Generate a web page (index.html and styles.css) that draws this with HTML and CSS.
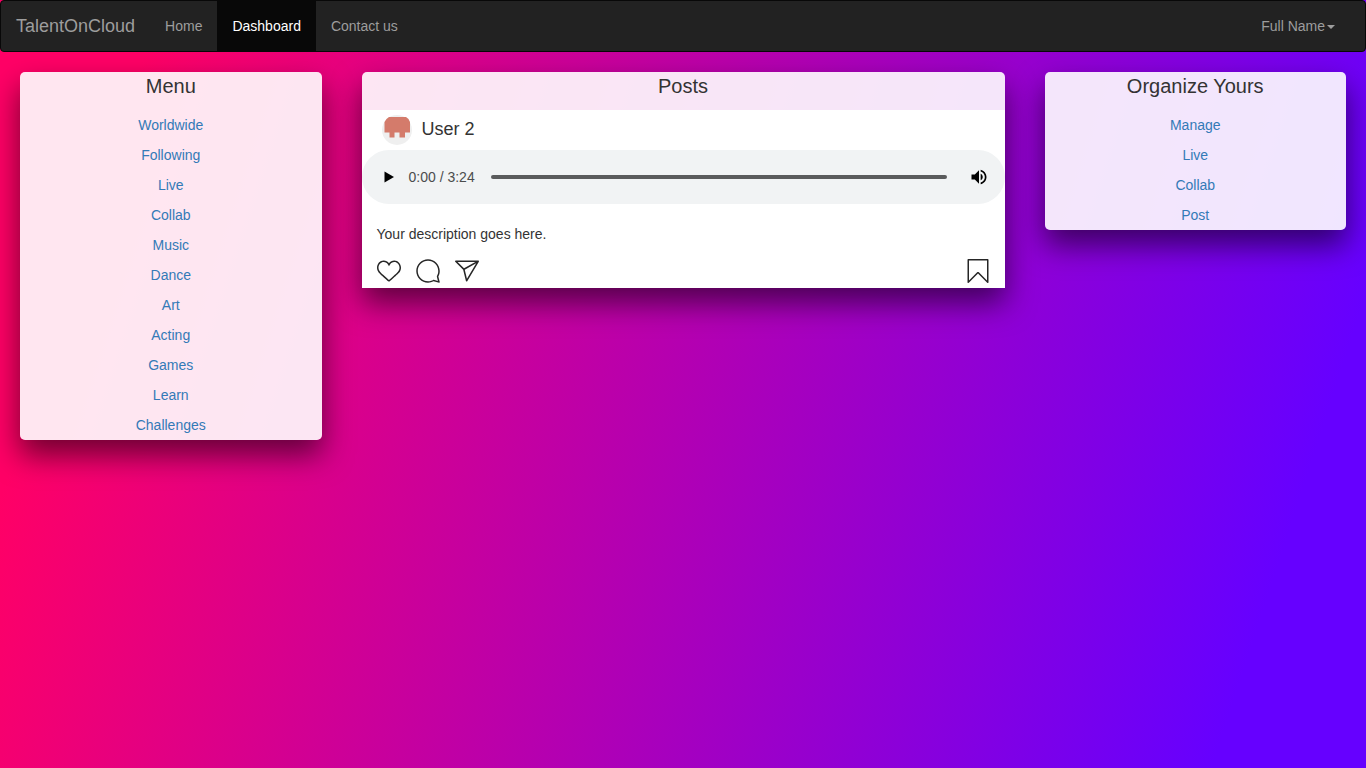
FILE: index.html
```html
<!DOCTYPE html>
<html lang="en">
<head>
<meta charset="utf-8">
<title>TalentOnCloud</title>
<link rel="stylesheet" href="styles.css">
</head>
<body>
<nav class="navbar">
  <a class="brand">TalentOnCloud</a>
  <a class="nav-link">Home</a>
  <a class="nav-link active">Dashboard</a>
  <a class="nav-link">Contact us</a>
  <a class="nav-link account">Full Name<span class="caret"></span></a>
</nav>
<main class="columns">
  <section class="card">
    <h2 class="title">Menu</h2>
    <ul class="links">
      <li><a>Worldwide</a></li><li><a>Following</a></li><li><a>Live</a></li><li><a>Collab</a></li>
      <li><a>Music</a></li><li><a>Dance</a></li><li><a>Art</a></li><li><a>Acting</a></li>
      <li><a>Games</a></li><li><a>Learn</a></li><li><a>Challenges</a></li>
    </ul>
  </section>
  <section class="card posts">
    <h2 class="title">Posts</h2>
    <article class="post">
      <header class="author">
        <svg class="avatar" viewBox="0 0 30 30"><circle cx="15" cy="15" r="15" fill="#efefef"/><path d="M7 2h17l2.500 2L28 7v10.500h-5v5h-5.500v-5h-5v5h-5v-5H2.500V7l2-3z" fill="#d47b6b"/></svg>
        <span>User 2</span>
      </header>
      <div class="player">
        <svg class="play" width="10" height="12" viewBox="0 0 10 12"><path d="M.5 .5v11L10 6z"/></svg>
        <span class="time">0:00 / 3:24</span>
        <span class="track"></span>
        <svg class="volume" width="20" height="20" viewBox="0 0 24 24"><path d="M3 9v6h4l5 5V4L7 9H3zm13.500 3c0-1.770-1.020-3.290-2.500-4.030v8.050c1.480-.730 2.500-2.250 2.500-4.020zM14 3.230v2.060c2.890.860 5 3.540 5 6.710s-2.110 5.850-5 6.710v2.060c4.010-.910 7-4.490 7-8.770s-2.990-7.860-7-8.770z"/></svg>
      </div>
      <p class="description">Your description goes here.</p>
      <div class="actions">
        <svg viewBox="0 0 48 48"><path d="M34.600 6.100c5.700 0 10.400 5.200 10.400 11.500 0 6.800-5.900 11-11.500 16S25 41.300 24 41.900c-1.100-.7-4.700-4-9.500-8.300-5.700-5-11.500-9.200-11.500-16C3 11.300 7.700 6.100 13.400 6.100c4.200 0 6.500 2 8.100 4.300 1.900 2.600 2.200 3.900 2.500 3.900.3 0 .6-1.300 2.500-3.900 1.600-2.300 3.900-4.300 8.100-4.300m0-3c-4.500 0-7.900 1.800-10.600 5.600-2.700-3.700-6.100-5.500-10.600-5.500C6 3.100 0 9.600 0 17.600c0 7.300 5.400 12 10.600 16.500.6.500 1.300 1.100 1.900 1.700l2.300 2c4.400 3.900 6.600 5.900 7.600 6.500.5.300 1.100.5 1.600.5.600 0 1.100-.2 1.600-.5 1-.6 2.800-2.200 7.800-6.800l2-1.800c.7-.6 1.300-1.200 2-1.700C42.700 29.600 48 25 48 17.600c0-8-6-14.500-13.400-14.500z"/></svg>
        <svg viewBox="0 0 48 48"><path clip-rule="evenodd" fill-rule="evenodd" d="M47.500 46.100l-2.800-11c1.800-3.300 2.800-7.100 2.800-11.100C47.500 11 37 .5 24 .5S.5 11 .5 24 11 47.500 24 47.500c4 0 7.800-1 11.100-2.800l11 2.800c.8.200 1.600-.6 1.400-1.400zm-3-22.100c0 4-1 7-2.600 10-.2.400-.3.900-.2 1.400l2.100 8.400-8.300-2.100c-.5-.1-1-.1-1.400.2-1.800 1-5.200 2.600-10 2.600-11.400 0-20.600-9.200-20.600-20.500S12.700 3.500 24 3.500 44.500 12.700 44.500 24z"/></svg>
        <svg viewBox="0 0 48 48"><path d="M47.800 3.800c-.3-.5-.8-.8-1.300-.8h-45C.9 3.100.3 3.500.1 4S0 5.200.4 5.700l15.900 15.600 5.500 22.600c.1.600.6 1 1.200 1.100h.2c.5 0 1-.3 1.300-.7l23.200-39c.4-.4.4-1 .1-1.500zM5.200 6.100h35.500L18 18.700 5.200 6.100zm18.700 33.600l-4.400-18.400L42.400 8.600 23.900 39.700z"/></svg>
        <svg class="save" viewBox="0 0 48 48"><path d="M43.500 48c-.4 0-.8-.2-1.100-.4L24 29 5.600 47.600c-.4.400-1.100.6-1.600.3-.6-.2-1-.8-1-1.400v-45C3 .7 3.700 0 4.500 0h39c.8 0 1.500.7 1.500 1.500v45c0 .6-.4 1.200-.9 1.400-.2.100-.4.100-.6.100zM24 26c.8 0 1.600.3 2.200.9l15.800 16V3H6v39.900l15.800-16c.6-.6 1.400-.9 2.200-.9z"/></svg>
      </div>
    </article>
  </section>
  <section class="card">
    <h2 class="title">Organize Yours</h2>
    <ul class="links">
      <li><a>Manage</a></li><li><a>Live</a></li><li><a>Collab</a></li><li><a>Post</a></li>
    </ul>
  </section>
</main>
</body>
</html>
```
FILE: styles.css
```css
* { box-sizing: border-box; }
body {
  margin: 0;
  min-height: 100vh;
  font: 14px/20px "Liberation Sans", Arial, sans-serif;
  color: #333;
  background: linear-gradient(108deg, #ff0066 10%, #6600ff 90.5%);
}
.navbar {
  display: flex;
  height: 52px;
  border: 1px solid #080808;
  border-radius: 4px;
  background: #222;
  color: #9d9d9d;
}
.brand { padding: 15px; font-size: 18px; }
.nav-link { padding: 15px; }
.active { background: #080808; color: #fff; }
.account { display: flex; align-items: center; margin-left: auto; margin-right: 15px; }
.caret {
  margin: 1px 0 0 2px;
  border-top: 4px solid;
  border-left: 4px solid transparent;
  border-right: 4px solid transparent;
}
.columns {
  display: grid;
  grid-template-columns: 301.500px 643px 301.500px;
  gap: 40px;
  align-items: start;
  padding: 20px;
}
.card {
  border-radius: 5px;
  background: rgba(255, 255, 255, .9);
  box-shadow: 0 15px 30px rgba(0, 0, 0, .56);
}
.title {
  margin: 0;
  padding-bottom: 10px;
  font-size: 20px;
  font-weight: 400;
  line-height: 28px;
  text-align: center;
}
.links { margin: 0; padding: 0; list-style: none; text-align: center; line-height: 30px; color: #337ab7; }
.posts { border-radius: 5px 5px 0 0; }
.post { height: 178px; background: #fff; }
.author { display: flex; gap: 10px; height: 40px; padding: 5px 0 0 20px; font-size: 18px; line-height: 28px; }
.avatar { width: 30px; height: 30px; }
.player {
  display: flex;
  align-items: center;
  height: 54px;
  padding: 0 16px 0 22px;
  border-radius: 27px;
  background: #f1f3f4;
}
.time { margin-left: 15px; color: #4b4c4d; }
.track { flex: 1; height: 4px; margin: 0 22px 0 16px; border-radius: 2px; background: #5a5b5c; }
.description { margin: 0; padding: 20px 15px 15px; }
.actions { display: flex; gap: 15px; padding: 0 15px; }
.actions svg { width: 24px; height: 24px; fill: #262626; }
.actions .save { margin-left: auto; }
```
